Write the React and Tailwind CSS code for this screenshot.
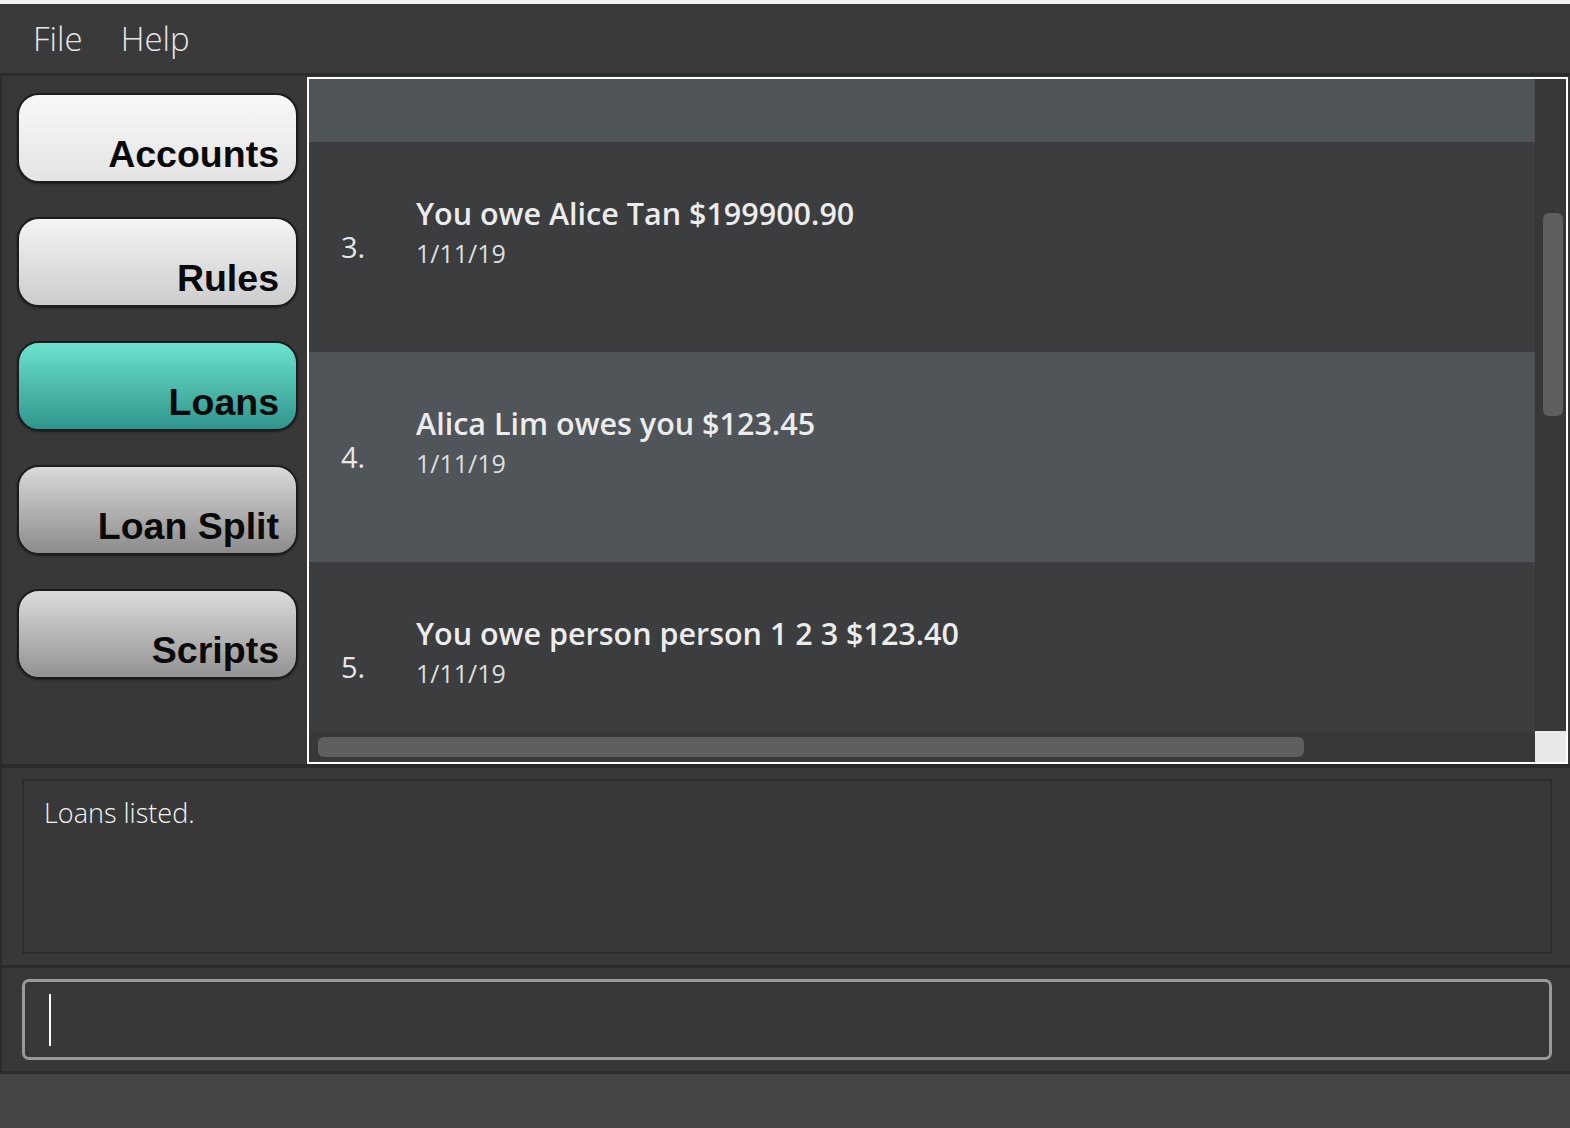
import React from 'react';

const tabs = [
  { label: 'Accounts', tone: 'bg-linear-to-b from-[#f8f8f8] to-[#e4e4e4]' },
  { label: 'Rules', tone: 'bg-linear-to-b from-[#f4f4f4] to-[#cdcdcd]' },
  { label: 'Loans', tone: 'bg-linear-to-b from-[#6ce3cf] to-[#2f958c]' },
  { label: 'Loan Split', tone: 'bg-linear-to-b from-[#dadada] to-[#8c8c8c]' },
  { label: 'Scripts', tone: 'bg-linear-to-b from-[#dcdcdc] to-[#939393]' },
];

const loans = [
  { id: 3, text: 'You owe Alice Tan $199900.90', date: '1/11/19', bg: 'bg-[#3c3d3f]' },
  { id: 4, text: 'Alica Lim owes you $123.45', date: '1/11/19', bg: 'bg-[#505559]' },
  { id: 5, text: 'You owe person person 1 2 3 $123.40', date: '1/11/19', bg: 'bg-[#3c3d3f]' },
];

const segoe = { fontFamily: '"Open Sans", "Noto Sans", sans-serif' };

const LoanRow = ({ loan }) => (
  <div className={`flex h-[210px] shrink-0 items-center ${loan.bg}`}>
    <div className="w-[107px] shrink-0 pl-[32px] text-[29px] text-[#e8e8e8]">{loan.id}.</div>
    <div className="self-start pt-[51px]">
      <div className="text-[30.5px] font-semibold leading-[40px] text-[#ececec] whitespace-nowrap">{loan.text}</div>
      <div className="mt-[3px] text-[25px] leading-[34px] text-[#dedede]">{loan.date}</div>
    </div>
  </div>
);

export default function App() {
  return (
    <div className="flex h-[1128px] w-[1570px] flex-col bg-[#383838]" style={segoe}>
      <div className="h-[4px] bg-[#f2f2f2]" />

      {/* menu bar */}
      <div className="flex h-[69px] items-center gap-[38px] bg-[#3a3a3a] px-[33px] text-[33px] font-light text-[#e6e6e6]">
        <span>File</span>
        <span>Help</span>
      </div>
      <div className="h-[3px] bg-[#2b2b2b]" />

      {/* main area */}
      <div className="flex h-[688px]">
        <div className="flex w-[307px] shrink-0 flex-col gap-[34px] border-l-2 border-[#2b2b2b] pl-[15px] pr-[9px] pt-[17px]">
          {tabs.map((t) => (
            <div
              key={t.label}
              className={`flex h-[90px] items-end justify-end rounded-[22px] border-2 border-[#1c1c1c] pb-[8px] pr-[17px] shadow-[0_1px_2px_rgba(0,0,0,0.5)] ${t.tone}`}
            >
              <span
                className="text-[37.5px] font-bold leading-none text-[#0a0a0a]"
                style={{ fontFamily: '"Liberation Sans", Arial, sans-serif' }}
              >
                {t.label}
              </span>
            </div>
          ))}
        </div>

        <div className="mt-[1px] flex w-[1261px] flex-col border-2 border-white">
          <div className="flex min-h-0 flex-1">
            <div className="flex min-w-0 flex-1 flex-col overflow-hidden">
              <div className="h-[63px] shrink-0 bg-[#505559]" />
              {loans.map((l) => (
                <LoanRow key={l.id} loan={l} />
              ))}
            </div>
            <div className="w-[31px] shrink-0 bg-[#383838] pl-[8px] pt-[134px]">
              <div className="h-[203px] w-[20px] rounded-[6px] bg-[#5f5f5f]" />
            </div>
          </div>
          <div className="flex h-[31px] shrink-0">
            <div className="flex-1 bg-[#383838] pl-[9px] pt-[6px]">
              <div className="h-[20px] w-[986px] rounded-[6px] bg-[#5f5f5f]" />
            </div>
            <div className="w-[31px] bg-[#e8e8e8]" />
          </div>
        </div>
      </div>
      <div className="h-[4px] bg-[#2b2b2b]" />

      {/* result display */}
      <div className="h-[197px] border-l-2 border-[#2b2b2b] pl-[20px] pr-[18px] pt-[11px]">
        <div className="h-[175px] border-2 border-[#2c2c2c] pl-[20px] pt-[12px] text-[27px] font-light text-[#f4f4f4]">
          Loans listed.
        </div>
      </div>
      <div className="h-[3px] bg-[#2b2b2b]" />

      {/* command box */}
      <div className="h-[103px] border-l-2 border-[#2b2b2b] pl-[20px] pr-[18px] pt-[11px]">
        <div className="flex h-[81px] items-center rounded-[7px] border-[3px] border-[#9a9a9a] pl-[24px]">
          <div className="h-[52px] w-[2px] bg-white" />
        </div>
      </div>
      <div className="h-[3px] bg-[#2b2b2b]" />

      {/* status bar */}
      <div className="flex-1 bg-[#444444]" />
    </div>
  );
}
